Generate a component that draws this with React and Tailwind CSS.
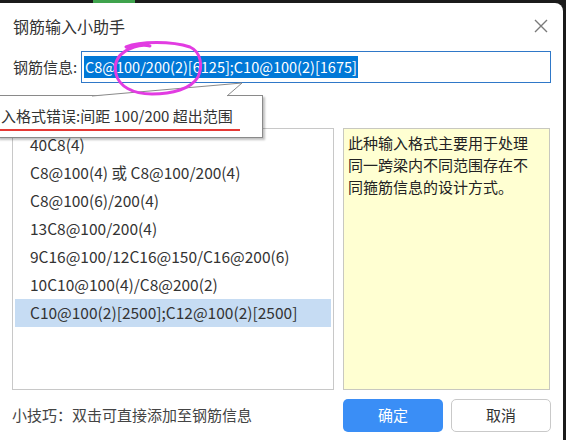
import React from 'react';

const font = { fontFamily: '"Noto Sans CJK SC", "Noto Sans", sans-serif' };

const samples = [
  '40C8(4)',
  'C8@100(4) 或 C8@100/200(4)',
  'C8@100(6)/200(4)',
  '13C8@100/200(4)',
  '9C16@100/12C16@150/C16@200(6)',
  '10C10@100(4)/C8@200(2)',
  'C10@100(2)[2500];C12@100(2)[2500]',
];

export default function App(){
  const selected = 6;

  return (
    <div className="w-[566px] h-[440px] bg-[#1b1b1b] flex flex-col overflow-hidden" style={font}>
      {/* strip of the desktop behind the dialog */}
      <div className="h-[3px] flex">
        <div className="w-[93px]" />
        <div className="w-[42px] bg-[#3fa34d]" />
      </div>

      <div className="flex-1 flex pr-[3px]">
        <div className="relative flex-1 bg-white rounded-tr-[8px] flex flex-col px-[12px] text-[#333]">
          {/* title bar */}
          <div className="h-[44px] flex items-center justify-between">
            <span className="text-[16px] pl-[1px] pt-[1px]">钢筋输入小助手</span>
            <svg width="14" height="14" viewBox="0 0 14 14" className="mr-[3px] mt-[1px]">
              <path d="M1 1 L13 13 M13 1 L1 13" stroke="#7a7a7a" strokeWidth="1.4" />
            </svg>
          </div>

          {/* input row */}
          <div className="flex items-center h-[32px] mt-[4px]">
            <span className="w-[69px] text-[15px] pl-[1px]">钢筋信息:</span>
            <div className="flex-1 h-[32px] border border-[#2f78c8] flex items-center px-[2px]">
              <span className="bg-[#0078d7] text-white text-[14.5px] leading-[22px] px-[1px] whitespace-nowrap">
                C8@100/200(2)[6125];C10@100(2)[1675]
              </span>
            </div>
          </div>

          {/* list + description */}
          <div className="flex gap-[9px] mt-[45px] h-[262px]">
            <div className="w-[322px] border border-[#c8c8c8] p-[2px] flex flex-col">
              {samples.map((s, i) => (
                <div
                  key={s}
                  className={
                    'h-[28px] flex items-center pl-[15px] text-[15.5px] whitespace-nowrap ' +
                    (i === selected ? 'bg-[#c6dcf3]' : '')
                  }
                >
                  {s}
                </div>
              ))}
            </div>
            <div className="w-[207px] bg-[#ffffd2] border border-[#c8c8c0] pl-[4px] pr-[14px] pt-[3px] text-[15px] leading-[22px] text-[#222]">
              此种输入格式主要用于处理同一跨梁内不同范围存在不同箍筋信息的设计方式。
            </div>
          </div>

          {/* footer */}
          <div className="flex items-center mt-[9px] h-[33px]">
            <span className="flex-1 text-[15px] text-[#444]">小技巧：双击可直接添加至钢筋信息</span>
            <button className="w-[100px] h-[33px] rounded-[5px] bg-[#3a8ef6] text-white text-[15px]">确定</button>
            <button className="w-[100px] h-[33px] ml-[8px] rounded-[5px] border border-[#c9c9c9] bg-white text-[15px] text-[#333]">取消</button>
          </div>

          {/* validation balloon */}
          <div className="absolute left-[-3px] top-[92px] w-[266px] h-[43px] bg-white border border-[#8a8a8a] shadow-[2px_2px_2px_rgba(0,0,0,0.25)]">
            <div className="absolute left-[3px] top-[9px] text-[15px] whitespace-nowrap text-[#333]">
              入格式错误:间距 100/200 超出范围
            </div>
            <div className="absolute left-0 top-[33px] w-[242px] h-[2px] bg-[#e53935]" />
          </div>
          <svg className="absolute left-0 top-0 pointer-events-none" width="563" height="440" viewBox="0 0 563 440">
            <path d="M92 93 L242 80 L227 93" fill="white" stroke="#8a8a8a" strokeWidth="1" />
            {/* hand-drawn marker circle */}
            <path
              d="M126 44 C140 38 172 38 190 44 C201 49 203 63 198 74 C191 86 172 91 152 91 C132 91 119 83 116 71 C113 58 120 49 134 44 C140 42 146 42 150 43"
              fill="none"
              stroke="#e23ce2"
              strokeWidth="3"
              strokeLinecap="round"
            />
          </svg>
        </div>
      </div>
    </div>
  );
}
